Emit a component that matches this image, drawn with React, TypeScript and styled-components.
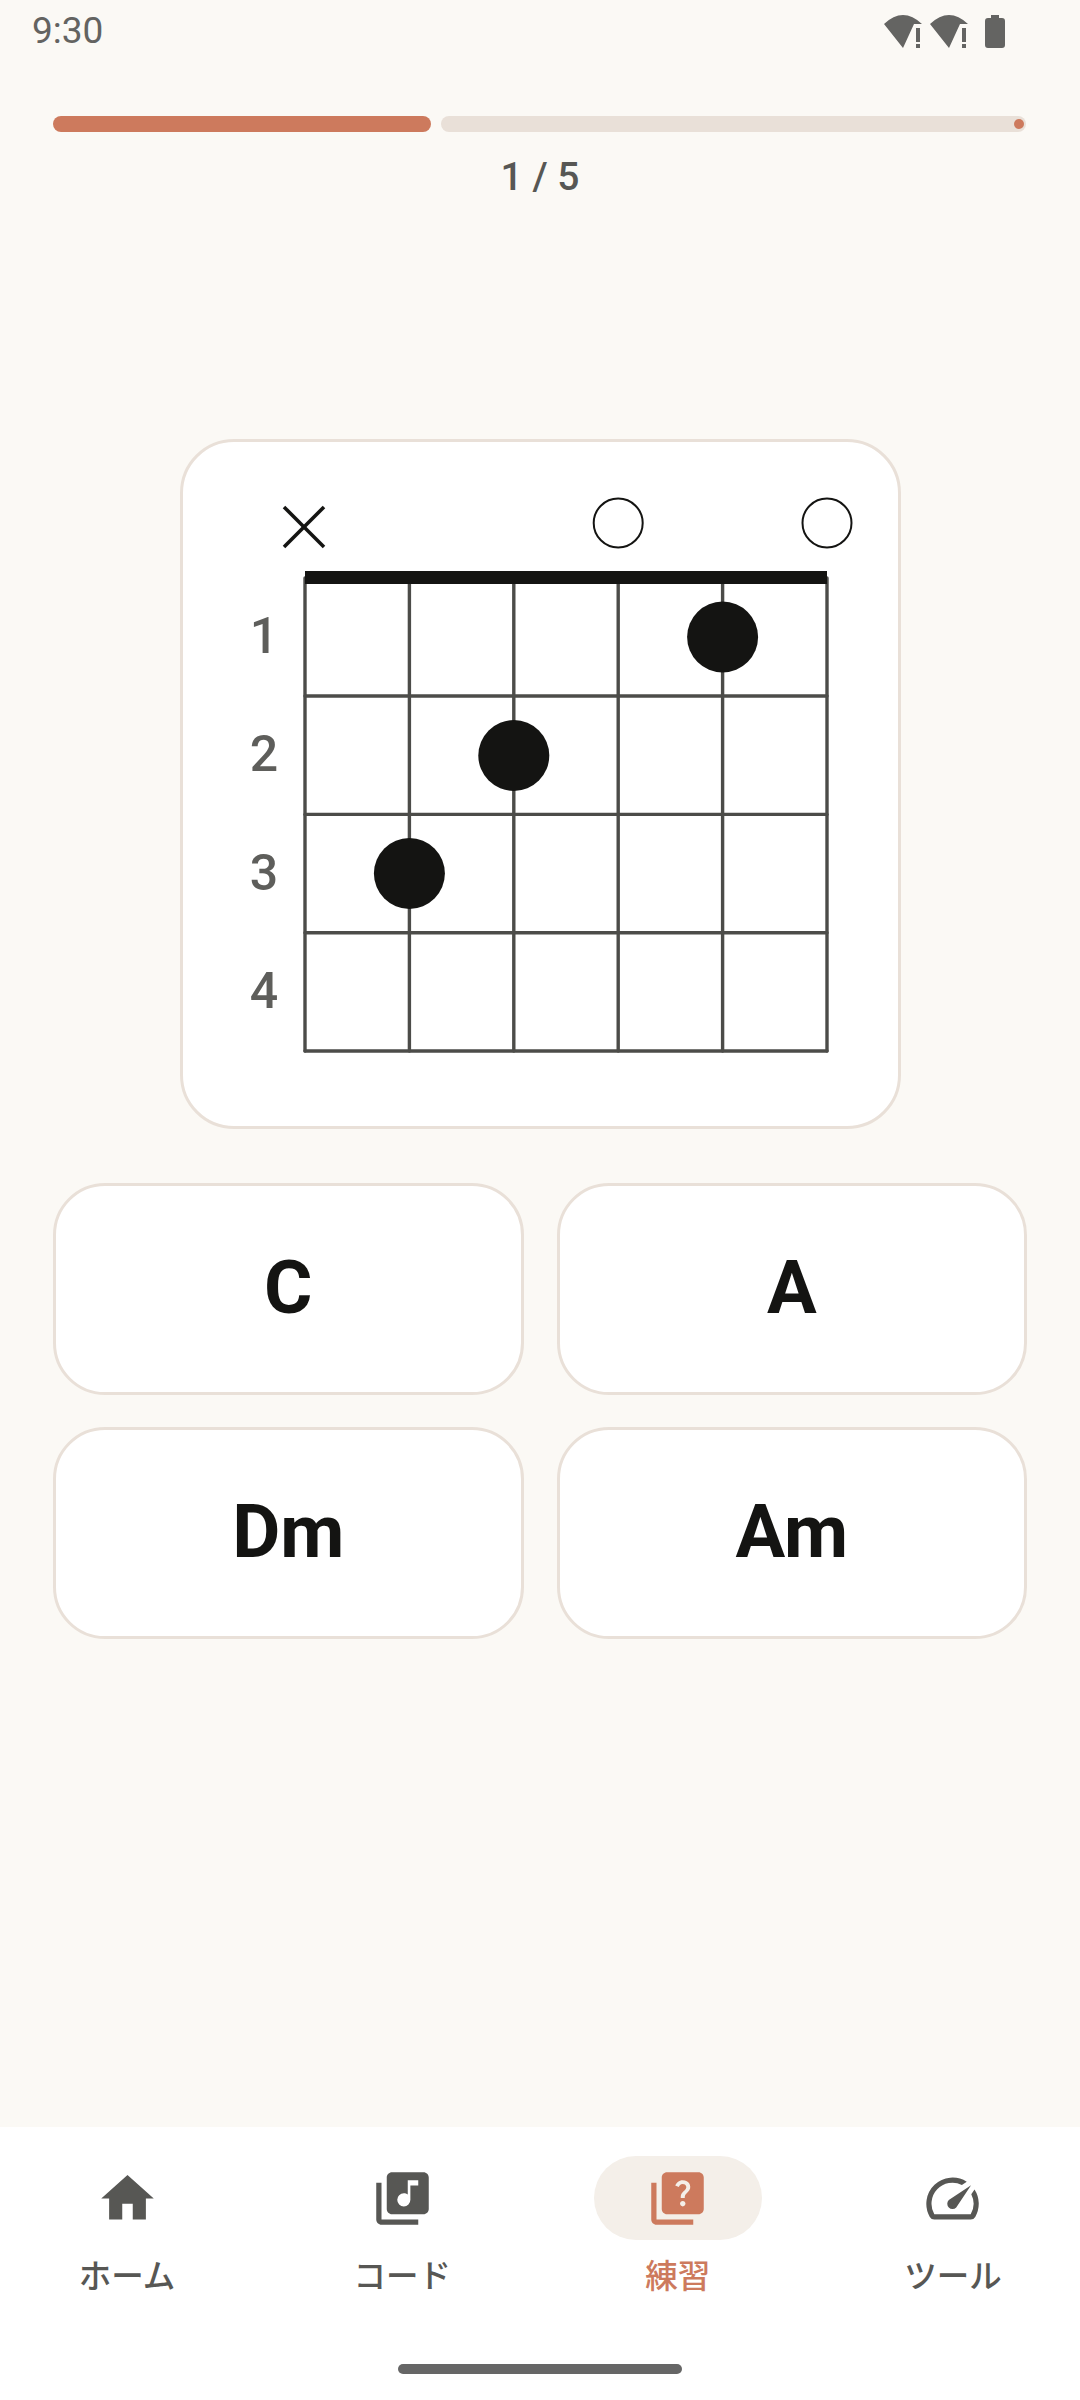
import React from 'react';
import styled, { createGlobalStyle } from 'styled-components';
import { MdHome, MdLibraryMusic, MdQuiz, MdSpeed } from 'react-icons/md';

const INK = '#141412';
const MUTED = '#575754';
const ACCENT = '#cd7a5d';
const LINE = '#e9e0d8';
const PAPER = '#fbf9f5';

const GlobalStyle = createGlobalStyle`
    html, body {
        margin: 0;
        padding: 0;
        background: ${PAPER};
    }
    * {
        box-sizing: border-box;
    }
`;

const Screen = styled.div`
    width: 1080px;
    height: 2400px;
    display: flex;
    flex-direction: column;
    background: ${PAPER};
    font-family: Roboto, 'Noto Sans CJK JP', sans-serif;
    overflow: hidden;
`;

const StatusBar = styled.div`
    height: 62px;
    display: flex;
    align-items: center;
    justify-content: space-between;
    padding: 0 75px 0 32px;
`;

const Clock = styled.span`
    font-size: 37px;
    line-height: 44px;
    color: #636361;
`;

const StatusIcons = styled.div`
    display: flex;
    align-items: center;
    gap: 8px;
    margin-top: 1px;
`;

const BatteryIcon = styled.svg`
    margin-left: 9px;
    display: block;
`;

const Progress = styled.div`
    margin: 54px 54px 0 53px;
    height: 16px;
    display: flex;
    gap: 10px;
`;

const ProgressDone = styled.div`
    width: 378px;
    border-radius: 8px;
    background: ${ACCENT};
`;

const ProgressRest = styled.div`
    flex: 1;
    position: relative;
    border-radius: 8px;
    background: ${LINE};
`;

const StopDot = styled.div`
    position: absolute;
    right: 2px;
    top: 3px;
    width: 10px;
    height: 10px;
    border-radius: 50%;
    background: ${ACCENT};
`;

const Counter = styled.div`
    margin-top: 20px;
    text-align: center;
    font-size: 39px;
    line-height: 50px;
    font-weight: 500;
    color: ${MUTED};
`;

const DiagramCard = styled.div`
    align-self: center;
    margin-top: 237px;
    width: 721px;
    height: 690px;
    border: 3px solid ${LINE};
    border-radius: 54px;
    background: #fff;
`;

const Diagram = styled.svg`
    display: block;
    width: 714px;
    height: 684px;
`;

const FretNumber = styled.text`
    font-family: Roboto, sans-serif;
    font-size: 50px;
    font-weight: 500;
    fill: #5e5e5b;
    text-anchor: middle;
`;

const Answers = styled.div`
    margin: 54px 53px 0 53px;
    display: grid;
    grid-template-columns: 1fr 1fr;
    grid-auto-rows: 212px;
    gap: 32px 33px;
`;

const AnswerButton = styled.button`
    border: 3px solid ${LINE};
    border-radius: 52px;
    background: #fff;
    padding: 0 0 3px;
    font-family: Roboto, sans-serif;
    font-size: 74px;
    font-weight: 700;
    color: ${INK};
`;

const BottomNav = styled.nav`
    margin-top: auto;
    height: 273px;
    display: flex;
    flex-direction: column;
    background: #fff;
`;

const NavRow = styled.div`
    margin-top: 29px;
    padding: 0 43px;
    display: flex;
    justify-content: space-between;
`;

const NavItem = styled.div`
    width: 168px;
    display: flex;
    flex-direction: column;
    align-items: center;
    gap: 12px;
`;

const NavIconWrap = styled.div<{ $active: boolean }>`
    width: 168px;
    height: 84px;
    display: flex;
    align-items: center;
    justify-content: center;
    border-radius: 42px;
    background: ${p => (p.$active ? '#f4efe9' : 'transparent')};
    color: ${p => (p.$active ? ACCENT : MUTED)};
    font-size: 63px;
`;

const NavLabel = styled.span<{ $active: boolean }>`
    font-family: 'Noto Sans CJK JP', sans-serif;
    font-size: 32.5px;
    font-weight: 500;
    line-height: 44px;
    white-space: nowrap;
    color: ${p => (p.$active ? ACCENT : MUTED)};
`;

const HomeIndicator = styled.div`
    align-self: center;
    margin-top: 68px;
    width: 284px;
    height: 10px;
    border-radius: 5px;
    background: #666;
`;

// diagram coords are card inner coords (page minus 183 / 442)
const STRINGS = [122, 226.4, 330.8, 435.2, 539.6, 644];
const FRETS = [254, 372.4, 490.7, 609];
const DOTS = [
    { x: 539.6, y: 195 },
    { x: 330.8, y: 313.5 },
    { x: 226.4, y: 431.5 },
];

function WifiAlert() {
    return (
        <svg width="38" height="33" viewBox="0 0 38 33" fill="#646462">
            <path d="M0 9Q19 -9 38 9L30 9L19 33Z" />
            <rect x="32" y="13" width="4" height="14" />
            <rect x="32" y="29" width="4" height="4" />
        </svg>
    );
}

function Chord() {
    return (
        <Diagram viewBox="0 0 714 684">
            <g stroke={INK} strokeWidth="3.6" strokeLinecap="butt">
                <line x1="101" y1="65" x2="141" y2="105" />
                <line x1="141" y1="65" x2="101" y2="105" />
            </g>
            <circle cx="435.2" cy="81" r="24.5" fill="none" stroke={INK} strokeWidth="2" />
            <circle cx="644" cy="81" r="24.5" fill="none" stroke={INK} strokeWidth="2" />
            <g stroke="#4c4c49" strokeWidth="3.4" strokeLinecap="round">
                {STRINGS.map(x => (
                    <line key={x} x1={x} y1="136" x2={x} y2="609" />
                ))}
                {FRETS.map(y => (
                    <line key={y} x1="122" y1={y} x2="644" y2={y} />
                ))}
            </g>
            <rect x="122" y="129" width="522" height="13" fill={INK} />
            {DOTS.map(d => (
                <circle key={d.x} cx={d.x} cy={d.y} r="35.5" fill={INK} />
            ))}
            {[1, 2, 3, 4].map((n, i) => (
                <FretNumber key={n} x="81" y={211 + i * 118.3}>
                    {n}
                </FretNumber>
            ))}
        </Diagram>
    );
}

const NAV = [
    { label: 'ホーム', Icon: MdHome },
    { label: 'コード', Icon: MdLibraryMusic },
    { label: '練習', Icon: MdQuiz, active: true },
    { label: 'ツール', Icon: MdSpeed },
];

export default function App() {
    return (
        <Screen>
            <GlobalStyle />
            <StatusBar>
                <Clock>9:30</Clock>
                <StatusIcons>
                    <WifiAlert />
                    <WifiAlert />
                    <BatteryIcon width="20" height="33" viewBox="0 0 20 33" fill="#646462">
                        <path d="M6 0h8v3h3a3 3 0 0 1 3 3v24a3 3 0 0 1-3 3H3a3 3 0 0 1-3-3V6a3 3 0 0 1 3-3h3z" />
                    </BatteryIcon>
                </StatusIcons>
            </StatusBar>

            <Progress>
                <ProgressDone />
                <ProgressRest>
                    <StopDot />
                </ProgressRest>
            </Progress>
            <Counter>1 / 5</Counter>

            <DiagramCard>
                <Chord />
            </DiagramCard>

            <Answers>
                {['C', 'A', 'Dm', 'Am'].map(name => (
                    <AnswerButton key={name}>{name}</AnswerButton>
                ))}
            </Answers>

            <BottomNav>
                <NavRow>
                    {NAV.map(({ label, Icon, active }) => (
                        <NavItem key={label}>
                            <NavIconWrap $active={!!active}>
                                <Icon />
                            </NavIconWrap>
                            <NavLabel $active={!!active}>{label}</NavLabel>
                        </NavItem>
                    ))}
                </NavRow>
                <HomeIndicator />
            </BottomNav>
        </Screen>
    );
}
